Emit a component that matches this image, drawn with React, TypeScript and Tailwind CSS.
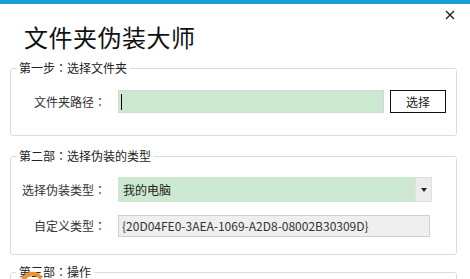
import React from 'react';

const font = { fontFamily: '"Microsoft YaHei", "Noto Sans CJK SC", "Noto Sans", sans-serif' };

// YaHei centres the full-width colon; the SC font puts it to the left, TC centres it
function Txt({ text }: { text: string }) {
  const parts = text.split('：');
  return (
    <>
      {parts.map((p, i) => (
        <React.Fragment key={i}>
          {i > 0 && <span style={{ fontFamily: '"Noto Sans CJK TC", sans-serif' }}>：</span>}
          {p}
        </React.Fragment>
      ))}
    </>
  );
}

function GroupBox({ title, children, className }: { title: string; children?: React.ReactNode; className?: string }) {
  return (
    <fieldset className={`mx-[10px] w-[447px] rounded-[3px] border border-[#dcdcdc] ${className ?? ''}`}>
      <legend className="ml-[5px] px-[3px] text-[12px] leading-[16px] text-[#222] [text-spacing-trim:space-all]">
        <Txt text={title} />
      </legend>
      {children}
    </fieldset>
  );
}

function Label({ text }: { text: string }) {
  return (
    <div className="w-[95px] shrink-0 text-right text-[12px] leading-[16px] text-[#333] [text-spacing-trim:space-all]">
      <Txt text={text} />
    </div>
  );
}

export default function App() {
  return (
    <div className="relative h-[279px] w-[470px] overflow-hidden bg-white" style={font}>
      <div className="h-[4px] bg-[#15a1d6]" />

      {/* close */}
      <button className="absolute right-[14px] top-[9px] flex h-[12px] w-[12px] items-center justify-center">
        <svg width="10" height="10" viewBox="0 0 10 10">
          <path d="M1 1 L9 9 M9 1 L1 9" stroke="#222" strokeWidth="1.4" />
        </svg>
      </button>

      <h1 className="ml-[24px] mt-[18px] text-[24px] leading-[30px] tracking-[0.5px] text-[#111]">文件夹伪装大师</h1>

      <GroupBox title="第一步：选择文件夹" className="mt-[8px] pb-[22px] pt-[14px]">
        <div className="flex items-center">
          <Label text="文件夹路径：" />
          <div className="ml-[12px] flex h-[23px] w-[266px] items-center border border-[#d6d6d6] bg-[#cde8d0] px-[2px]">
            <div className="h-[16px] w-[1px] bg-black" />
          </div>
          <button className="ml-[6px] h-[23px] w-[56px] border border-[#111] bg-white text-[12px] text-[#222]">选择</button>
        </div>
      </GroupBox>

      <GroupBox title="第二部：选择伪装的类型" className="mt-[12px] pb-[17px] pt-[13px]">
        <div className="flex items-center">
          <Label text="选择伪装类型：" />
          <div className="ml-[12px] flex h-[25px] w-[314px] items-stretch">
            <div className="flex flex-1 items-center bg-[#cde8d0] pl-[5px] text-[12px] text-[#222]">我的电脑</div>
            <div className="flex w-[17px] items-center justify-center border border-[#e0e0e0] bg-[#ececec]">
              <svg width="6" height="4" viewBox="0 0 6 4">
                <path d="M0 0 L6 0 L3 4 Z" fill="#222" />
              </svg>
            </div>
          </div>
        </div>
        <div className="mt-[13px] flex items-center">
          <Label text="自定义类型：" />
          <div className="ml-[12px] flex h-[22px] w-[312px] items-center border border-[#d0d0d0] bg-[#efefef] pl-[3px] text-[12px] text-[#333]">
            {'{20D04FE0-3AEA-1069-A2D8-08002B30309D}'}
          </div>
        </div>
      </GroupBox>

      <GroupBox title="第三部：操作" className="mt-[9px] h-[40px]" />

      {/* overlapping icon */}
      <svg className="absolute left-[14px] top-[265px]" width="32" height="32" viewBox="0 0 32 32">
        <path d="M9 16 A10 10 0 0 1 26 12" fill="none" stroke="#f0922c" strokeWidth="4" strokeLinecap="round" />
        <path d="M3 30 A14 14 0 0 1 8 17" fill="none" stroke="#7cc24a" strokeWidth="3.5" strokeLinecap="round" />
      </svg>
    </div>
  );
}
